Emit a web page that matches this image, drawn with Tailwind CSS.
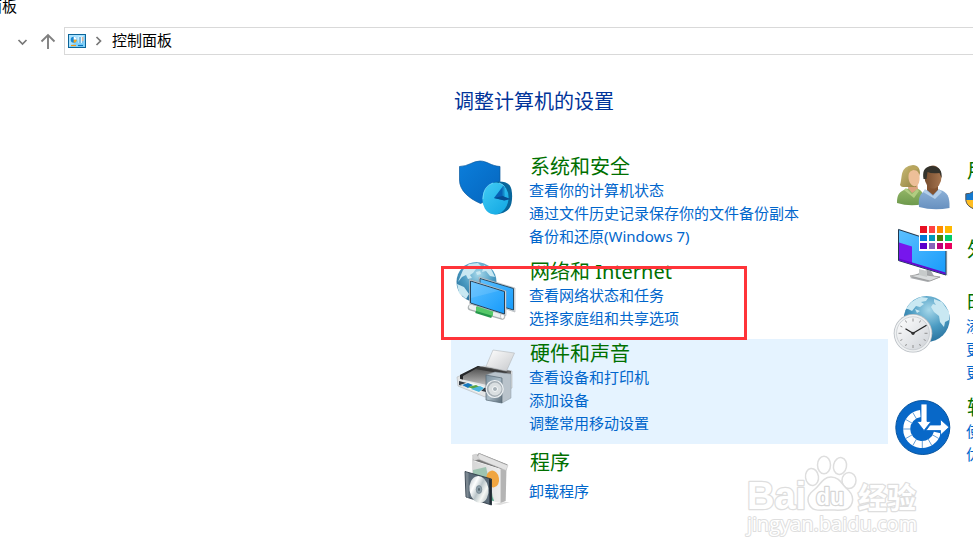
<!DOCTYPE html>
<html lang="zh-CN">
<head>
<meta charset="utf-8">
<title>控制面板</title>
<script src="https://cdn.jsdelivr.net/npm/@tailwindcss/browser@4"></script>
</head>
<body class="relative min-h-screen overflow-hidden bg-white font-['Noto_Sans','Noto_Sans_CJK_SC',sans-serif] text-[15px] leading-[23px] text-black">

<header>
  <div class="-ml-[43px] h-4 w-max leading-3">控制面板</div>
  <div class="mt-[11px] flex h-7 items-center whitespace-nowrap">
    <button type="button" aria-label="最近位置" class="ml-4 flex h-7 w-[13px] items-center justify-center">
      <svg class="size-[13px]" viewBox="0 0 13 13" fill="none" stroke="#777" stroke-width="1.7"><path d="M2.500 5l4 4 4-4"/></svg>
    </button>
    <button type="button" aria-label="上移" class="ml-[11px] flex h-7 w-4 items-center justify-center">
      <svg class="size-4" viewBox="0 0 16 16" fill="none" stroke="#808080" stroke-width="1.900"><path d="M8 16V2.500M1.500 8.500L8 2l6.500 6.500"/></svg>
    </button>
    <nav aria-label="地址" class="ml-2 flex h-7 flex-1 items-center border border-r-0 border-[#d9d9d9] pl-[3px]">
      <svg class="-mt-px h-[14px] w-[18px]" viewBox="0 0 18 14">
        <rect x=".5" y=".5" width="17" height="13" fill="#7fd0fa" stroke="#0c6498"/>
        <path d="M1 1h16L1 13z" fill="#a9e2ff"/>
        <circle cx="5.700" cy="5.800" r="3" fill="#1687d2"/><path d="M5.700 5.800V2.800a3 3 0 0 1 3 3z" fill="#fff"/><path d="M5.700 5.800h3a3 3 0 0 1-3 3z" fill="#f8a51b"/>
        <path d="M10.500 2.500h5v6.500h-5z" fill="#e7f8ff"/><path d="M11 4h2M11 6h2M11 8h2" stroke="#1680c5"/><path d="M14 4h1.500M14 6h1.500" stroke="#d46f3b"/><path d="M14 8h1.500" stroke="#1680c5"/>
        <path d="M3 11.500h5" stroke="#f29819" stroke-width="1.200"/><path d="M10 11.500h5" stroke="#0875bd" stroke-width="1.200"/>
      </svg>
      <svg class="ml-2 h-3 w-[9px]" viewBox="0 0 9 12" fill="none" stroke="#777" stroke-width="1.700"><path d="M2.500 2l4 4-4 4"/></svg>
      <a href="#" class="ml-[9px] pb-0.5">控制面板</a>
    </nav>
  </div>
</header>

<main class="ml-[451px] pt-[35px]">
  <h1 class="ml-[3px] h-[62px] text-xl leading-6 text-[#003399]">调整计算机的设置</h1>

  <div class="grid w-max grid-cols-[437px_437px] items-start whitespace-nowrap text-[#0066cc]">
    <div>
      <section class="flex pb-[9px]">
        <svg class="h-16 w-[78px] shrink-0 overflow-visible" viewBox="0 0 78 64">
          <defs>
            <linearGradient id="sh" x1="0" y1="0" x2="1" y2="1"><stop offset="0" stop-color="#0b7edb"/><stop offset="1" stop-color="#0565bd"/></linearGradient>
            <linearGradient id="pie" x1="0" y1="0" x2="1" y2="1"><stop offset="0" stop-color="#43ccf5"/><stop offset="1" stop-color="#10a6e2"/></linearGradient>
          </defs>
          <path d="M8.500 14.500C17 14.500 22 9 29 9S40 14 49 14.500v14c0 11-9 19-19.500 23C17 46 8.500 38 8.500 28z" fill="url(#sh)" stroke="#08599f" stroke-width=".7"/>
          <path d="M43 30c5-1 12-1 15.500 3s3.500 18 0 23S47 63 43 62z" fill="#08669b"/>
          <ellipse cx="44.500" cy="46.500" rx="13" ry="16" transform="rotate(8 44.500 46.500)" fill="url(#pie)"/>
          <path d="M48 31q4 1 6 4M32 47q0-13 10-16" fill="none" stroke="#7fe0fa" stroke-width=".7"/>
          <path d="M43 46l9.500-12.500 1 15z" fill="#0761b5"/><path d="M43 46l10.500 2.500 6-1.500-8-3z" fill="#064c91"/><path d="M51.500 35l2-1.500v11l-2-1z" fill="#1488c8"/>
        </svg>
        <div>
          <h2 class="pl-px text-xl leading-[29px] text-[#007000]">系统和安全</h2>
          <ul class="-mt-0.5"><li><a href="#">查看你的计算机状态</a></li><li><a href="#">通过文件历史记录保存你的文件备份副本</a></li><li><a href="#">备份和还原(Windows 7)</a></li></ul>
        </div>
      </section>

      <section class="relative flex pb-[9px]">
        <svg class="h-16 w-[78px] shrink-0 overflow-visible" viewBox="0 0 78 64">
          <defs>
            <radialGradient id="globe" cx=".55" cy=".3" r=".7"><stop offset="0" stop-color="#a7d8ea"/><stop offset=".55" stop-color="#4b9bc2"/><stop offset="1" stop-color="#29739f"/></radialGradient>
            <linearGradient id="screen" x1="0" y1="0" x2="1" y2="1"><stop offset="0" stop-color="#5cc0ff"/><stop offset="1" stop-color="#179bfb"/></linearGradient>
          </defs>
          <circle cx="25.500" cy="25" r="20" fill="url(#globe)"/>
          <path d="M12 13l6-6 9-1 3 3-5 3-3 4-3 2 2 3-4 1-2-4-4 2-4 5zM33 8l7 4 4 8-5-1-4-5-4 1zM6 27l7 3 5 7-3 5-7-6zM25 15l4-1 1 3-4 1z" fill="#c9e8f2"/>
          <path d="M28 20l36 11v24L28 43z" fill="#e0e2e3" stroke="#a7adb1" stroke-width=".6"/>
          <path d="M29 21.500l33.500 10v21.500L29 43z" fill="url(#screen)" stroke="#284c65"/>
          <path d="M20 50.500l31 9" stroke="#a9afb0" stroke-width="6.500" stroke-linecap="round"/><path d="M20 50l31 9" stroke="#edf0ef" stroke-width="4.500" stroke-linecap="round"/>
          <path d="M25.500 52l16 5" stroke="#26984b" stroke-width="8.500"/><path d="M26 51l16 5" stroke="#65d174" stroke-width="4"/>
          <ellipse cx="51.500" cy="59" rx="2" ry="3" fill="#fff" stroke="#aaa" stroke-width=".6"/>
          <path d="M18.500 22.500l36.500 11.500v24.500l-36.500-12z" fill="#e2e4e5" stroke="#a7adb1" stroke-width=".6"/>
          <path d="M19.500 24l34 10.500v22.500L19.500 46z" fill="url(#screen)" stroke="#264056"/>
          <path d="M20 24.500l29 9L20 41z" fill="#fff" opacity=".12"/>
          <path d="M25 49.500l17 5.500v4l-17-5z" fill="#56c868"/>
        </svg>
        <div>
          <h2 class="pl-px text-xl leading-[29px] text-[#007000]">网络和 Internet</h2>
          <ul class="-mt-0.5"><li><a href="#">查看网络状态和任务</a></li><li><a href="#">选择家庭组和共享选项</a></li></ul>
        </div>
        <div class="pointer-events-none absolute -left-[10px] top-[9px] z-10 h-[74px] w-[306px] border-3 border-[#ff3439]"></div>
      </section>

      <section class="flex bg-[#e5f3ff] pb-[9px]">
        <svg class="h-16 w-[78px] shrink-0 overflow-visible" viewBox="0 0 78 64">
          <defs>
            <linearGradient id="paper" x1="0" y1="0" x2="1" y2="1"><stop stop-color="#fff"/><stop offset="1" stop-color="#c7c9cc"/></linearGradient>
            <linearGradient id="prn" x1="0" y1="0" x2="0" y2="1"><stop stop-color="#444"/><stop offset="1" stop-color="#bbb"/></linearGradient>
            <linearGradient id="spk" x1="0" y1="0" x2="1" y2="1"><stop stop-color="#7c909e"/><stop offset=".5" stop-color="#a9bac5"/><stop offset="1" stop-color="#5a6b78"/></linearGradient>
          </defs>
          <path d="M6 38l27-11 28 5v17L34 58 7 47z" fill="#e3e5e6" stroke="#b1b5b9" stroke-width=".6"/>
          <path d="M9 36l18-9 33 5v5l-24 9-27-6z" fill="url(#prn)"/><path d="M9 36l18-9 2 .5L12 37v3.500l-3-.8z" fill="#252629"/>
          <path d="M35 27.500L42 11l21.500 3-8 18z" fill="url(#paper)" stroke="#b4b8bc" stroke-width=".6"/>
          <path d="M28 28l29 5-4 2-29-5z" fill="#3a3a3a"/>
          <path d="M8 42l27 7v4L8 46z" fill="#333a42"/>
          <path d="M9 46l9-3 16 5-6 6z" fill="#f8faf8"/><path d="M11 46l6-2 5 2-5 3z" fill="#1878bd"/><path d="M17 48l8-2 6 3-4 3z" fill="#58a444"/><path d="M20 50l9-3 4 2-5 4z" fill="#4bb6df"/>
          <path d="M35 36l9-3 16 2v24l-9 5z" fill="#b9c3cb" stroke="#8e9aa5" stroke-width=".5"/>
          <path d="M35 36l16 3v25l-16-3z" fill="url(#spk)" stroke="#566774" stroke-width=".7"/>
          <circle cx="43.700" cy="50" r="8.500" fill="#a7b0b6" stroke="#eef2f4" stroke-width="1.200"/><circle cx="44" cy="50" r="6.500" fill="#dadfe1"/><circle cx="44" cy="50" r="2.500" fill="#a9b3b9" stroke="#f8fafa"/>
        </svg>
        <div>
          <h2 class="pl-px text-xl leading-[29px] text-[#007000]">硬件和声音</h2>
          <ul class="-mt-0.5"><li><a href="#">查看设备和打印机</a></li><li><a href="#">添加设备</a></li><li><a href="#">调整常用移动设置</a></li></ul>
        </div>
      </section>

      <section class="flex">
        <svg class="h-16 w-[78px] shrink-0 overflow-visible" viewBox="0 0 78 64">
          <defs>
            <linearGradient id="box" x1="0" y1="0" x2="1" y2="0"><stop stop-color="#d6d6d6"/><stop offset="1" stop-color="#ededed"/></linearGradient>
            <linearGradient id="cd" x1="0" y1="0" x2="1" y2="1"><stop stop-color="#aab4bb"/><stop offset=".3" stop-color="#fff"/><stop offset=".5" stop-color="#bac5c9"/><stop offset=".7" stop-color="#f6f8f5"/><stop offset="1" stop-color="#9caaae"/></linearGradient>
          </defs>
          <path d="M42 60l12-2 5 0-10 3z" fill="#ddd"/>
          <path d="M21.500 16l6.500-7 28.500 11.500-2 6z" fill="#777"/>
          <path d="M21 11l1.500 6 27 8v34L21.500 53z" fill="url(#box)"/>
          <path d="M49.500 25l6-2-.8 34-5.200 2z" fill="#b4b4b4"/>
          <path d="M28 9.500l29 12-2 5-29-12z" fill="#e2e2e2" stroke="#bbb" stroke-width=".5"/><path d="M21.500 11l4-1 3 5-6 2z" fill="#d4d4d4" stroke="#bbb" stroke-width=".4"/>
          <path d="M22 26l13-3 8 34-21-5z" fill="#9fc4b1"/><path d="M38 46l5 11-4-1z" fill="#52a386"/>
          <ellipse cx="41.700" cy="35" rx="6.300" ry="8.500" transform="rotate(-10 41.700 35)" fill="#f0a540"/>
          <path d="M14 27.500l26.500 7.500v26L15 53z" fill="#5b6b78" stroke="#25313c" stroke-width=".8"/>
          <path d="M14.500 28l3 1v25l-2-.5z" fill="#7b8790"/><path d="M38 35l2.500.7v25l-2-.5z" fill="#202a33"/>
          <ellipse cx="28" cy="45.500" rx="9.500" ry="13.500" transform="rotate(-8 28 45.500)" fill="url(#cd)"/>
          <ellipse cx="28" cy="45.500" rx="2.800" ry="4" fill="#8ea0aa" stroke="#6a7b86" stroke-width=".6"/><ellipse cx="28" cy="45.500" rx="1" ry="1.400" fill="#56646e"/>
        </svg>
        <div class="pt-1">
          <h2 class="pl-px text-xl leading-[29px] text-[#007000]">程序</h2>
          <ul class="mt-[3px]"><li><a href="#">卸载程序</a></li></ul>
        </div>
      </section>
    </div>

    <div>
      <section class="flex h-[75px]">
        <svg class="h-16 w-[78px] shrink-0 overflow-visible" viewBox="0 0 78 64">
          <defs>
            <linearGradient id="grn" x1="0" y1="0" x2="0" y2="1"><stop stop-color="#9bbb6c"/><stop offset="1" stop-color="#6d994c"/></linearGradient>
            <linearGradient id="blu" x1="0" y1="0" x2="0" y2="1"><stop stop-color="#90b4da"/><stop offset="1" stop-color="#6790bf"/></linearGradient>
            <linearGradient id="hair" x1="0" y1="0" x2="1" y2="1"><stop stop-color="#cbbd77"/><stop offset="1" stop-color="#8f7e3e"/></linearGradient>
            <linearGradient id="skin" x1="0" y1="0" x2="1" y2="0"><stop stop-color="#754b2d"/><stop offset="1" stop-color="#a77650"/></linearGradient>
          </defs>
          <path d="M9 51c0-8 2-12 10-14l6-3 7 4c3 2 4 7 3 14q-13 3-26-1z" fill="url(#grn)"/>
          <path d="M21 30h8l1 7-6 4-4-5z" fill="#dba27d"/>
          <path d="M18 36l6 6 5-5 2 2-5 7-10-8z" fill="#b1cc81"/>
          <path d="M12 33c3-8-1-18 13-20 5 0 7 4 7 8l-4 14H15q-2 0-3-2z" fill="url(#hair)"/>
          <path d="M25 18c6 0 7 5 6.500 10s-3 7-6 6-5-5-5-9 1-6 4.500-7z" fill="#edbf98"/><path d="M19 27c1-9 5-9 12-10-2-4-8-3-11 0z" fill="#b9a55c"/>
          <path d="M31 55c-1-10 1-14 8-17l6-2 7 2c7 2 10 6 9.500 18q-16 3-30.500-1z" fill="url(#blu)"/>
          <path d="M39 31h11v7l-5 5-6-5z" fill="#835331"/><path d="M37 37l8 7 6-7 3 3-7 7-12-7z" fill="#b3cee9"/>
          <ellipse cx="45" cy="25" rx="8.500" ry="11.500" fill="url(#skin)"/><path d="M35.500 27c-1-7 0-12 8-13 8 0 11 5 10 12l-2-5q-8 1-12-1l-1 7z" fill="#34322b"/>
        </svg>
        <div class="pt-1">
          <h2 class="pl-px text-xl leading-[29px] text-[#007000]">用户帐户</h2>
          <ul class="mt-[3px]"><li><a href="#" class="-ml-px flex items-center gap-1">
            <svg class="h-[18px] w-4" viewBox="0 0 16 18"><path d="M8 .5Q5 3 .8 2.800V8c0 5 3 7.500 7.200 9.500z" fill="#1479cf"/><path d="M8 .5q3 2.500 7.200 2.300V8c0 5-3 7.500-7.200 9.500z" fill="#ffc82e"/><path d="M.8 9H8v8.500C4 15.500 1 13 .8 9z" fill="#ffbd21"/><path d="M15.200 9H8v8.500c4-2 7-4.500 7.200-8.500z" fill="#1479cf"/><path d="M8 .5Q5 3 .8 2.800V8c0 5 3 7.500 7.200 9.500 4.200-2 7.200-4.500 7.200-9.500V2.800Q11 3 8 .5z" fill="none" stroke="#555"/></svg>
            更改帐户类型</a></li></ul>
        </div>
      </section>

      <section class="flex h-[61px]">
        <svg class="h-16 w-[78px] shrink-0 overflow-visible" viewBox="0 0 78 64">
          <path d="M29 47l13-5 4 7 7 1-13 5-18-4z" fill="#a7aaad"/><path d="M22 49l10-2 20 3-10 4z" fill="#d9dcdd" stroke="#888" stroke-width=".6"/><path d="M31 42l8 2v6l-8-2z" fill="#c6caca"/>
          <path d="M10 1.500l49.500 16v31.500L10 34z" fill="#e2e4e5"/>
          <path d="M10.500 2.500l47.500 15.500v30L10.500 33.500z" fill="url(#screen)" stroke="#22384c"/>
          <path d="M11 15.500l13 4v17l-13-3.500z" fill="#7716ed"/><path d="M11 31.500l46.500 14v2L11 33.500z" fill="#6309cd"/>
          <path d="M31 -2h33.500v26H31z" fill="#fff"/>
          <g shape-rendering="crispEdges">
            <path d="M32-1h7v7h-7z" fill="#e81123"/><path d="M41-1h6v7h-6z" fill="#ff4343"/><path d="M49-1h6v7h-6z" fill="#ff8c00"/><path d="M57-1h7v7h-7z" fill="#ffb900"/>
            <path d="M32 8h7v6h-7z" fill="#0078d7"/><path d="M41 8h6v6h-6z" fill="#0099bc"/><path d="M49 8h6v6h-6z" fill="#498205"/><path d="M57 8h7v6h-7z" fill="#00cc6a"/>
            <path d="M32 16h7v6h-7z" fill="#5a00cc"/><path d="M41 16h6v6h-6z" fill="#8764b8"/><path d="M49 16h6v6h-6z" fill="#bf0077"/><path d="M57 16h7v6h-7z" fill="#ea005e"/>
          </g>
        </svg>
        <div class="pt-2"><h2 class="pl-px text-xl leading-[29px] text-[#007000]">外观和个性化</h2></div>
      </section>

      <section class="flex pb-[9px]">
        <svg class="h-[66px] w-[78px] shrink-0 overflow-visible" viewBox="0 0 78 66">
          <defs><linearGradient id="dial" x1="0" y1="0" x2="1" y2="1"><stop stop-color="#fff"/><stop offset="1" stop-color="#ced2d7"/></linearGradient></defs>
          <circle cx="38.700" cy="31" r="23" fill="url(#globe)"/>
          <path d="M18 21q5-9 15-12l7 1-2 3-5 1 3 2-4 3-4-1-4 5-4-2zM46 11l8 3 7 10v8l-4 2-1 5-4-5-1-6-5-4-3-5 2-3 3 1-2-3zM27 21l5 2-3 2z" fill="#c9e8f2"/>
          <circle cx="25" cy="45.300" r="19.300" fill="#b7bcc2"/><circle cx="25" cy="45.300" r="18.500" fill="#eff1f2"/><circle cx="25" cy="45.300" r="16.500" fill="url(#dial)" stroke="#b8bdc2" stroke-width=".6"/>
          <path d="M25 30.500v3M25 57v3M10.500 45.300h3M36.500 45.300h3M17.500 32.500l1 2M32.500 32.500l-1 2M12.300 38l2 1M12.300 52.500l2-1M17.500 58l1-2M32.500 58l-1-2M37.700 52.500l-2-1" stroke="#888" stroke-width=".9"/>
          <path d="M25 45.300l-7.500-4.500M25 45.300l13.500-8" stroke="#222" stroke-width="1.300"/><circle cx="25" cy="45.300" r="1.600" fill="#333"/>
        </svg>
        <div>
          <h2 class="pl-px text-xl leading-[29px] text-[#007000]">时钟、语言和区域</h2>
          <ul class="-mt-0.5"><li><a href="#">添加语言</a></li><li><a href="#">更换输入法</a></li><li><a href="#">更改日期、时间或数字格式</a></li></ul>
        </div>
      </section>

      <section class="flex">
        <svg class="h-16 w-[78px] shrink-0 overflow-visible" viewBox="0 0 78 64">
          <circle cx="34.800" cy="34.500" r="27" fill="#0868c8" stroke="#07549f"/>
          <path d="M32.500 20.600A15.500 15.500 0 1 0 49.300 39.500" fill="none" stroke="#fff" stroke-width="7"/>
          <path d="M15 36h7.500M34.300 47.500v7.500M17.800 26.500l6.600 3.800M24.800 19.500l3.800 6.600M17.800 45.500l6.600-3.800M24.800 52.500l3.800-6.600M43.800 52.500l-3.800-6.600M50.800 45.500l-6.600-3.800" stroke="#4188cb" stroke-width=".8"/>
          <path d="M33 11h6v17.500h4L36 37.500l-7-9h4z" fill="#fff" stroke="#0868c8" stroke-width=".8"/>
          <path d="M38 37.500l4-5.500h10.500v-5.500l8.500 7.700-8.500 7.800v-4.500z" fill="#fff" stroke="#0868c8" stroke-width=".8"/>
        </svg>
        <div>
          <h2 class="pl-px text-xl leading-[29px] text-[#007000]">轻松使用</h2>
          <ul class="-mt-0.5"><li><a href="#">使用 Windows 建议的设置</a></li><li><a href="#">优化视觉显示</a></li></ul>
        </div>
      </section>
    </div>
  </div>
</main>

<svg class="pointer-events-none absolute left-[743px] top-[452px] h-[92px] w-[182px]" viewBox="0 0 182 92" role="img" aria-label="Baidu 经验">
  <g fill="#fff" stroke="#dedede" stroke-width="1.500" stroke-linejoin="round">
    <ellipse cx="69" cy="25" rx="6.500" ry="8.500" transform="rotate(-8 69 25)"/>
    <ellipse cx="81" cy="13" rx="6.500" ry="8.800"/>
    <ellipse cx="97" cy="14" rx="6.500" ry="8.500" transform="rotate(12 97 14)"/>
    <ellipse cx="106" cy="28.500" rx="7" ry="8"/>
    <path d="M88 25c8 0 11 7 15 11 5 4 8 9 6 15-3 9-12 7-22 7s-18 2-21-6c-3-7 1-11 6-15s8-12 16-12z"/>
    <g font-weight="700" paint-order="stroke" stroke-width="2.500">
      <text x="4" y="57" font-family="Liberation Sans" font-size="38">Bai</text>
      <text x="73" y="53" font-family="Liberation Sans" font-size="23" stroke="#d6d6d6">du</text>
      <text x="115" y="57" font-family="Noto Sans CJK SC" font-size="29">经验</text>
      <text x="4" y="79" font-family="Open Sans" font-size="20" font-weight="400" stroke-width="2">jingyan.baidu.com</text>
    </g>
  </g>
</svg>
</body>
</html>
